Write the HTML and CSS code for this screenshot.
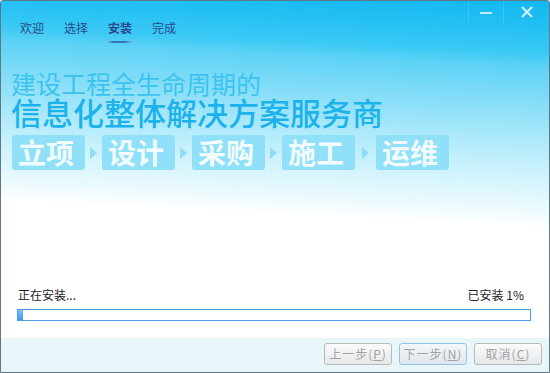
FILE: index.html
```html
<!DOCTYPE html>
<html lang="zh-CN">
<head>
  <meta charset="UTF-8">
  <title>安装</title>
  <link rel="stylesheet" href="styles.css">
</head>
<body>
  <div class="window">
    <div class="banner">
      <div class="titlebar">
        <nav class="tabs">
          <span class="tab">欢迎</span>
          <span class="tab">选择</span>
          <span class="tab active">安装</span>
          <span class="tab">完成</span>
        </nav>
        <div class="controls">
          <span class="ctrl min"><i></i></span>
          <span class="ctrl close">
            <svg width="12" height="12" viewBox="0 0 12 12"><path d="M1 1L11 11M11 1L1 11" stroke="#cdf1fd" stroke-width="2"/></svg>
          </span>
        </div>
      </div>
      <div class="slogan">
        <p class="line1">建设工程全生命周期的</p>
        <p class="line2">信息化整体解决方案服务商</p>
      </div>
      <div class="steps">
        <span class="pill">立项</span><span class="arrow"></span>
        <span class="pill">设计</span><span class="arrow"></span>
        <span class="pill">采购</span><span class="arrow"></span>
        <span class="pill">施工</span><span class="arrow wide"></span>
        <span class="pill">运维</span>
      </div>
    </div>
    <div class="status">
      <div class="status-row">
        <span>正在安装...</span>
        <span>已安装 1%</span>
      </div>
      <div class="progress"><div class="fill" style="width:1%"></div></div>
    </div>
    <div class="footer">
      <button class="btn" disabled>上一步(<u>P</u>)</button>
      <button class="btn focus" disabled>下一步(<u>N</u>)</button>
      <button class="btn" disabled>取消(<u>C</u>)</button>
    </div>
  </div>
</body>
</html>
```

FILE: styles.css
```css
body {
  margin: 0;
  font-family: "Noto Sans CJK SC", "Liberation Sans", sans-serif;
  background: #fff;
}
.window {
  width: 550px;
  height: 373px;
  box-sizing: border-box;
  border: 1px solid #5e7886;
  border-radius: 3px 3px 0 0;
  display: flex;
  flex-direction: column;
  overflow: hidden;
  background: linear-gradient(182.8deg, #12b8f1 0, #22bff3 25px, #3ac9f5 52px, #5fd3f6 68px, #88def8 105px, #b2ebfb 145px, #d4f4fd 180px, #ecfafe 208px, #fff 226px);
}
.titlebar {
  display: flex;
  height: 50px;
}
.tabs {
  display: flex;
  gap: 14px;
  margin-left: 16px;
  padding-top: 19px;
}
.tab {
  font-size: 12px;
  line-height: 16px;
  height: 16px;
  padding: 0 3px 5px;
  color: #2a4889;
  position: relative;
}
.tab.active {
  font-weight: bold;
}
.tab.active::after {
  content: "";
  position: absolute;
  left: 0;
  right: 0;
  bottom: -2px;
  height: 2px;
  background: linear-gradient(90deg, rgba(150,215,245,0.6), #3670bb 30%, #3a74bd 65%, rgba(150,215,245,0.6));
}
.controls {
  margin-left: auto;
  display: flex;
  height: 24px;
}
.ctrl {
  display: flex;
  align-items: center;
  justify-content: center;
  border-left: 1px solid rgba(255,255,255,0.12);
}
.ctrl.min {
  width: 34px;
}
.ctrl.min i {
  width: 12px;
  height: 2px;
  margin-top: -1px;
  background: #c3edfc;
}
.ctrl.close {
  width: 46px;
  align-items: flex-start;
  padding-top: 5px;
  box-sizing: border-box;
}
.slogan {
  padding-left: 10px;
  margin-top: 19px;
}
.slogan p {
  margin: 0;
}
.line1 {
  font-size: 25px;
  line-height: 26px;
  color: #3cc4f1;
}
.line2 {
  font-size: 31px;
  line-height: 32px;
  font-weight: 500;
  color: #1cb3ec;
}
.steps {
  display: flex;
  align-items: center;
  padding-left: 11px;
  margin-top: 7px;
}
.pill {
  width: 73px;
  height: 35px;
  box-sizing: border-box;
  padding-left: 6px;
  border-radius: 3px;
  background: #8fe0f8;
  color: #f2fcff;
  font-size: 28px;
  font-weight: bold;
  line-height: 35px;
}
.arrow {
  width: 17px;
  display: flex;
  justify-content: center;
}
.arrow.wide {
  width: 21px;
}
.arrow::before {
  content: "";
  border-left: 7px solid #8fdcf5;
  border-top: 6px solid transparent;
  border-bottom: 6px solid transparent;
}
.status {
  margin-top: auto;
  padding: 0 18px 17px 16px;
}
.status-row {
  display: flex;
  justify-content: space-between;
  font-size: 12px;
  line-height: 16px;
  color: #222;
  padding: 0 7px 0 1px;
  margin-bottom: 6px;
}
.progress {
  height: 12px;
  box-sizing: border-box;
  border: 1px solid #4a9ee8;
  background: #fff;
}
.fill {
  height: 100%;
  min-width: 5px;
  background: linear-gradient(#7ac0f6, #4298e6);
}
.footer {
  height: 34px;
  flex: none;
  background: #e9f6f9;
  display: flex;
  justify-content: flex-end;
  gap: 7px;
  padding: 5px 7px 0 0;
  box-sizing: border-box;
}
.btn {
  width: 68px;
  height: 22px;
  padding: 0;
  border: 1px solid #b7b9bb;
  border-radius: 3px;
  background: linear-gradient(#fbfbfb, #e5e7e9);
  color: #a2a2a2;
  font-family: "Noto Sans CJK SC", "Liberation Sans", sans-serif;
  font-size: 12px;
  line-height: 18px;
  letter-spacing: 1px;
}
.btn.focus {
  border-color: #92c3e9;
  background: linear-gradient(#f4f7fa, #dfe6ed);
}
```
